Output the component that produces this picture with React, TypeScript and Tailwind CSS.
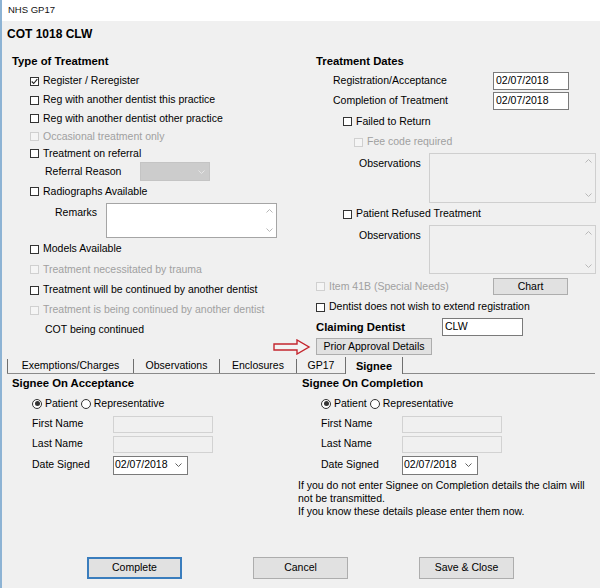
import clsx from 'clsx'

// Windows-style GP17 claim dialog

function Box({ checked, disabled }: { checked?: boolean; disabled?: boolean }) {
  return (
    <span
      className={clsx(
        'w-[9px] h-[9px] border flex items-center justify-center shrink-0',
        disabled ? 'border-[#d0d0d0] bg-[#f5f5f5]' : 'border-[#333333] bg-white'
      )}
    >
      {checked && (
        <svg width="7" height="7" viewBox="0 0 7 7">
          <path d="M0.7 3.5 L2.7 5.5 L6.3 1.2" stroke="#222" strokeWidth="1.1" fill="none" />
        </svg>
      )}
    </span>
  )
}

function Check({
  label,
  checked,
  disabled,
  className,
}: {
  label: string
  checked?: boolean
  disabled?: boolean
  className?: string
}) {
  return (
    <div className={clsx('flex items-center', className)}>
      <Box checked={checked} disabled={disabled} />
      <span className={clsx('ml-[4px] whitespace-nowrap', disabled && 'text-[#a0a0a0]')}>{label}</span>
    </div>
  )
}

function Radio({ selected }: { selected?: boolean }) {
  return (
    <span className="w-[10px] h-[10px] rounded-full border border-[#333333] bg-white flex items-center justify-center shrink-0">
      {selected && <span className="w-[5px] h-[5px] rounded-full bg-[#333333]" />}
    </span>
  )
}

function Chevron({ up, color = '#b8b8b8' }: { up?: boolean; color?: string }) {
  return (
    <svg width="7" height="4" viewBox="0 0 7 4">
      <path d={up ? 'M0.5 3.5 L3.5 0.5 L6.5 3.5' : 'M0.5 0.5 L3.5 3.5 L6.5 0.5'} stroke={color} strokeWidth="1" fill="none" />
    </svg>
  )
}

function Memo({ className, disabled }: { className?: string; disabled?: boolean }) {
  return (
    <div
      className={clsx(
        'border flex justify-end',
        disabled ? 'border-[#cfcfcf] bg-[#f0f0f0]' : 'border-[#a5a5a5] bg-white',
        className
      )}
    >
      <div className="w-[14px] h-full flex flex-col items-center justify-between py-[5px]">
        <Chevron up />
        <Chevron />
      </div>
    </div>
  )
}

function TextBox({ value, className }: { value?: string; className?: string }) {
  return (
    <div className={clsx('bg-white border border-[#7a7a7a] flex items-center pl-[2px]', className)}>{value}</div>
  )
}

function DateSelect({ className }: { className?: string }) {
  return (
    <div className={clsx('bg-white border border-[#7a7a7a] flex items-center justify-between pl-[1px] pr-[5px]', className)}>
      <span>02/07/2018</span>
      <Chevron color="#606060" />
    </div>
  )
}

function Button({ label, className, primary }: { label: string; className?: string; primary?: boolean }) {
  return (
    <div
      className={clsx(
        'bg-[#e1e1e1] flex items-center justify-center',
        primary ? 'border-2 border-[#3a7dbd]' : 'border border-[#adadad]',
        className
      )}
    >
      {label}
    </div>
  )
}

function SigneePanel({ title, completion }: { title: string; completion?: boolean }) {
  const pad = completion ? 'pl-[21px]' : 'pl-[30px]'
  return (
    <div className={clsx('flex flex-col', completion ? 'flex-1' : 'w-[298px]')}>
      <div className={clsx('h-[19px] flex items-center font-bold text-[11.3px]', completion ? 'pl-[2px]' : 'pl-[10px]')}>
        {title}
      </div>
      <div className={clsx('h-[21px] flex items-center', pad)}>
        <Radio selected />
        <span className="ml-[3px]">Patient</span>
        <span className="ml-[3px]">
          <Radio />
        </span>
        <span className="ml-[3px]">Representative</span>
      </div>
      <div className={clsx('h-[20px] flex items-center', pad)}>
        <span className="w-[81px]">First Name</span>
        <div className="w-[100px] h-[17px] border border-[#d2d2d2] bg-[#f0f0f0]" />
      </div>
      <div className={clsx('h-[20px] flex items-center', pad)}>
        <span className="w-[81px]">Last Name</span>
        <div className="w-[100px] h-[17px] border border-[#d2d2d2] bg-[#f0f0f0]" />
      </div>
      <div className={clsx('h-[22px] flex items-center', pad)}>
        <span className="w-[81px]">Date Signed</span>
        <DateSelect className={completion ? 'w-[76px] h-[19px]' : 'w-[75px] h-[19px]'} />
      </div>
      {completion && (
        <p className="mt-[3px] leading-[13px] whitespace-nowrap -ml-[2px]">
          If you do not enter Signee on Completion details the claim will
          <br />
          not be transmitted.
          <br />
          If you know these details please enter them now.
        </p>
      )}
    </div>
  )
}

export default function App() {
  return (
    <div className="w-[600px] h-[588px] bg-[#f0f0f0] border-l-2 border-[#8db3d4] flex flex-col text-[10.5px] text-black font-['Liberation_Sans',Arial,sans-serif]">
      {/* Title bar */}
      <div className="h-[21px] bg-white flex items-center pl-[6px] text-[9.5px] text-[#111]">NHS GP17</div>
      <div className="h-[26px] flex items-center pl-[5px] font-bold text-[12px]">COT 1018 CLW</div>

      {/* Top section */}
      <div className="mt-[4px] h-[305px] flex">
        {/* Type of Treatment */}
        <div className="w-[298px] flex flex-col">
          <div className="h-[20px] flex items-center pl-[10px] font-bold text-[11.3px]">Type of Treatment</div>
          <Check className="h-[20px] pl-[28px]" label="Register / Reregister" checked />
          <Check className="h-[18px] pl-[28px]" label="Reg with another dentist this practice" />
          <Check className="h-[19px] pl-[28px]" label="Reg with another dentist other practice" />
          <Check className="h-[17px] pl-[28px]" label="Occasional treatment only" disabled />
          <Check className="h-[17px] pl-[28px]" label="Treatment on referral" />
          <div className="h-[19px] flex items-center pl-[43px]">
            <span className="w-[95px]">Referral Reason</span>
            <div className="w-[70px] h-[19px] bg-[#cccccc] border border-[#c4c4c4] flex items-center justify-end pr-[4px]">
              <Chevron color="#e6e6e6" />
            </div>
          </div>
          <Check className="h-[21px] pl-[28px]" label="Radiographs Available" />
          <div className="h-[37px] flex items-center pl-[53px]">
            <span className="w-[51px] self-start mt-[3px]">Remarks</span>
            <Memo className="w-[171px] h-[35px]" />
          </div>
          <Check className="h-[20px] pl-[28px]" label="Models Available" />
          <Check className="h-[21px] pl-[28px]" label="Treatment necessitated by trauma" disabled />
          <Check className="h-[20px] pl-[28px]" label="Treatment will be continued by another dentist" />
          <Check className="h-[20px] pl-[28px]" label="Treatment is being continued by another dentist" disabled />
          <div className="h-[20px] flex items-center pl-[43px]">COT being continued</div>
        </div>

        {/* Treatment Dates */}
        <div className="flex-1 flex flex-col">
          <div className="h-[20px] flex items-center pl-[16px] font-bold text-[11.3px]">Treatment Dates</div>
          <div className="h-[20px] flex items-center pl-[33px]">
            <span className="w-[160px]">Registration/Acceptance</span>
            <TextBox value="02/07/2018" className="w-[76px] h-[18px]" />
          </div>
          <div className="h-[20px] flex items-center pl-[33px]">
            <span className="w-[160px]">Completion of Treatment</span>
            <TextBox value="02/07/2018" className="w-[76px] h-[18px]" />
          </div>
          <Check className="h-[21px] pl-[43px]" label="Failed to Return" />
          <Check className="h-[20px] pl-[54px]" label="Fee code required" disabled />
          <div className="h-[52px] flex pl-[59px] pt-[1px]">
            <span className="w-[70px] mt-[3px]">Observations</span>
            <Memo className="w-[167px] h-[50px]" disabled />
          </div>
          <Check className="h-[20px] pl-[43px]" label="Patient Refused Treatment" />
          <div className="h-[52px] flex pl-[59px] pt-[1px]">
            <span className="w-[70px] mt-[3px]">Observations</span>
            <Memo className="w-[167px] h-[49px]" disabled />
          </div>
          <div className="h-[21px] flex items-center pl-[16px]">
            <Check className="w-[177px]" label="Item 41B (Special Needs)" disabled />
            <Button label="Chart" className="w-[75px] h-[17px]" />
          </div>
          <Check className="h-[20px] pl-[16px]" label="Dentist does not wish to extend registration" />
          <div className="h-[20px] flex items-center pl-[16px]">
            <span className="w-[126px] font-bold text-[11.3px]">Claiming Dentist</span>
            <TextBox value="CLW" className="w-[81px] h-[18px]" />
          </div>
          <div className="relative h-[19px] flex items-center pl-[16px]">
            <svg className="absolute -left-[27px] top-[2px]" width="38" height="16" viewBox="0 0 38 16">
              <polygon
                points="1,5 24,5 24,1 36,8 24,15 24,11 1,11"
                fill="#f3f3f3"
                stroke="#c4262e"
                strokeWidth="1.4"
                strokeLinejoin="miter"
              />
            </svg>
            <Button label="Prior Approval Details" className="w-[116px] h-[17px]" />
          </div>
        </div>
      </div>

      {/* Tabs */}
      <div className="mx-[5px] h-[18px] flex items-end border-b border-[#8a8a8a]">
        <div className="w-[126px] h-[14px] border-l border-[#6f6f6f] flex items-center justify-center">Exemptions/Charges</div>
        <div className="w-[86px] h-[14px] border-l border-[#6f6f6f] flex items-center justify-center">Observations</div>
        <div className="w-[77px] h-[14px] border-l border-[#6f6f6f] flex items-center justify-center">Enclosures</div>
        <div className="w-[49px] h-[14px] border-l border-[#6f6f6f] flex items-center justify-center">GP17</div>
        <div className="w-[58px] h-[17px] -mb-px border-x border-[#6f6f6f] bg-[#f0f0f0] flex items-start justify-center pt-[1px] font-bold text-[11px]">
          Signee
        </div>
      </div>

      {/* Signee content */}
      <div className="flex">
        <SigneePanel title="Signee On Acceptance" />
        <SigneePanel title="Signee On Completion" completion />
      </div>

      {/* Dialog buttons */}
      <div className="mt-auto mb-[9px] flex pl-[85px] gap-[71px]">
        <Button label="Complete" primary className="w-[95px] h-[22px]" />
        <Button label="Cancel" className="w-[95px] h-[22px]" />
        <Button label="Save & Close" className="w-[95px] h-[22px]" />
      </div>
    </div>
  )
}
